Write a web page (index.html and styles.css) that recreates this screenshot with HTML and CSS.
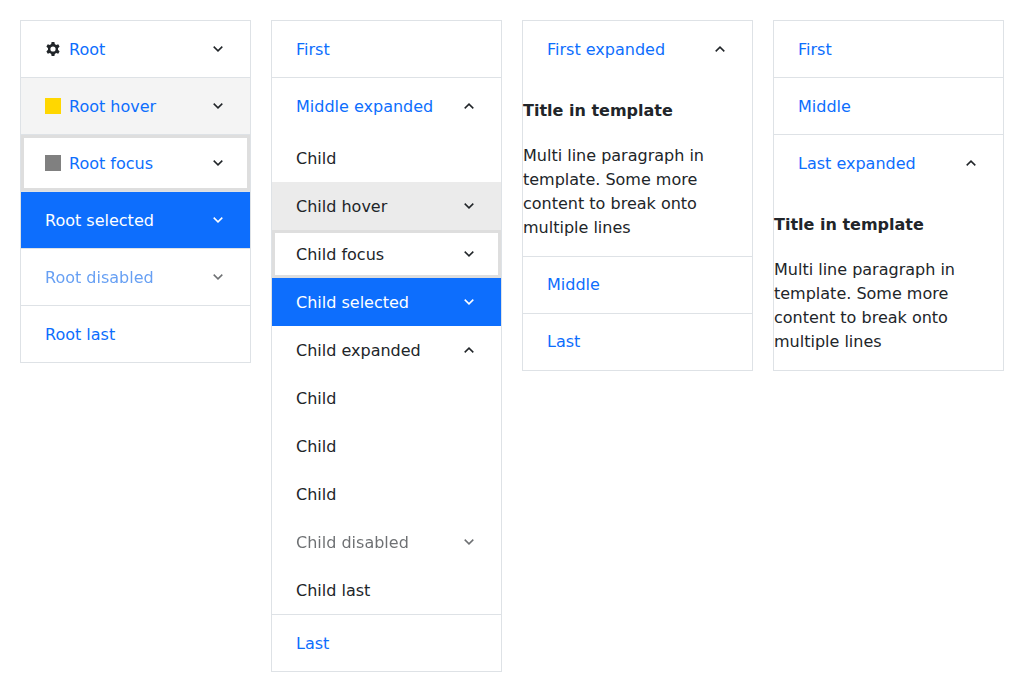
FILE: index.html
```html
<!DOCTYPE html>
<html lang="en">
<head>
<meta charset="utf-8">
<title>PanelBar</title>
<link rel="stylesheet" href="styles.css">
</head>
<body>
<svg width="0" height="0" class="defs">
  <symbol id="down" viewBox="0 0 16 16"><path d="M3.700 5.600L8 9.900l4.300-4.300" fill="none" stroke="currentColor" stroke-width="1.500"/></symbol>
  <symbol id="up" viewBox="0 0 16 16"><path d="M3.700 10.400L8 6.100l4.300 4.300" fill="none" stroke="currentColor" stroke-width="1.500"/></symbol>
</svg>
<main class="grid">
  <ul class="panelbar">
    <li class="item"><div class="link"><svg class="icon" viewBox="0 0 16 16"><path fill="currentColor" fill-rule="evenodd" d="M6.600 1h2.800l.4 2.100 1.400.8 2-.7 1.400 2.400L13 7.200v1.600l1.600 1.600-1.400 2.400-2-.7-1.400.8-.4 2.100H6.600l-.4-2.100-1.400-.8-2 .7-1.400-2.400L3 8.800V7.200L1.400 5.600l1.400-2.400 2 .7 1.400-.8zM8 5.400a2.600 2.600 0 1 0 0 5.200 2.600 2.600 0 0 0 0-5.200z"/></svg><span>Root</span><svg class="toggle"><use href="#down"/></svg></div></li>
    <li class="item"><div class="link hover"><span class="icon gold"></span><span>Root hover</span><svg class="toggle"><use href="#down"/></svg></div></li>
    <li class="item"><div class="link focus"><span class="icon gray"></span><span>Root focus</span><svg class="toggle"><use href="#down"/></svg></div></li>
    <li class="item"><div class="link selected"><span>Root selected</span><svg class="toggle"><use href="#down"/></svg></div></li>
    <li class="item"><div class="link disabled"><span>Root disabled</span><svg class="toggle"><use href="#down"/></svg></div></li>
    <li class="item"><div class="link"><span>Root last</span></div></li>
  </ul>
  <ul class="panelbar">
    <li class="item"><div class="link"><span>First</span></div></li>
    <li class="item"><div class="link"><span>Middle expanded</span><svg class="toggle"><use href="#up"/></svg></div>
      <ul class="group">
        <li class="child">Child</li>
        <li class="child hover">Child hover<svg class="toggle"><use href="#down"/></svg></li>
        <li class="child focus">Child focus<svg class="toggle"><use href="#down"/></svg></li>
        <li class="child selected">Child selected<svg class="toggle"><use href="#down"/></svg></li>
        <li class="child">Child expanded<svg class="toggle"><use href="#up"/></svg></li>
        <li class="child">Child</li>
        <li class="child">Child</li>
        <li class="child">Child</li>
        <li class="child disabled">Child disabled<svg class="toggle"><use href="#down"/></svg></li>
        <li class="child">Child last</li>
      </ul></li>
    <li class="item"><div class="link"><span>Last</span></div></li>
  </ul>
  <ul class="panelbar">
    <li class="item"><div class="link"><span>First expanded</span><svg class="toggle"><use href="#up"/></svg></div>
      <div class="content"><h4>Title in template</h4><p>Multi line paragraph in template. Some more content to break onto multiple lines</p></div></li>
    <li class="item"><div class="link even"><span>Middle</span></div></li>
    <li class="item"><div class="link even"><span>Last</span></div></li>
  </ul>
  <ul class="panelbar">
    <li class="item"><div class="link"><span>First</span></div></li>
    <li class="item"><div class="link"><span>Middle</span></div></li>
    <li class="item"><div class="link"><span>Last expanded</span><svg class="toggle"><use href="#up"/></svg></div>
      <div class="content"><h4>Title in template</h4><p>Multi line paragraph in template. Some more content to break onto multiple lines</p></div></li>
  </ul>
</main>
</body>
</html>
```
FILE: styles.css
```css
* { box-sizing: border-box; }
body { margin: 0; background: #fff; color: #212529; font: 16px/24px "DejaVu Sans", sans-serif; }
.defs { position: absolute; }
.grid { display: grid; grid-template-columns: repeat(4, 231px); gap: 20px; padding: 20px; align-items: start; }
ul { list-style: none; margin: 0; padding: 0; }
.panelbar { border: 1px solid #dee2e6; }
.item + .item { border-top: 1px solid #dee2e6; }
.link { display: flex; align-items: center; gap: 8px; padding: 17px 24px 15px; color: #0d6efd; }
.link.even { padding: 16px 24px; }
.child { display: flex; align-items: center; padding: 13px 24px 11px; }
/* The bottom margin keeps icons centred in the row */
.icon, .toggle { width: 16px; height: 16px; margin-bottom: 2px; color: #212529; }
.gold { background: gold; }
.gray { background: gray; }
.toggle { margin-left: auto; }
.link.hover { background: #f4f4f4; }
.child.hover { background: #ebebeb; }
.focus { box-shadow: inset 0 0 0 3px #dedede; }
.selected .toggle { color: #fff; }
.link.selected, .child.selected { background: #0d6efd; color: #fff; }
.disabled { opacity: .65; filter: grayscale(.1); }
.content h4 { margin: 0; padding: 22px 0 21px; font-size: 16px; line-height: 24px; }
.content p { margin: 0 0 16px; }
```
